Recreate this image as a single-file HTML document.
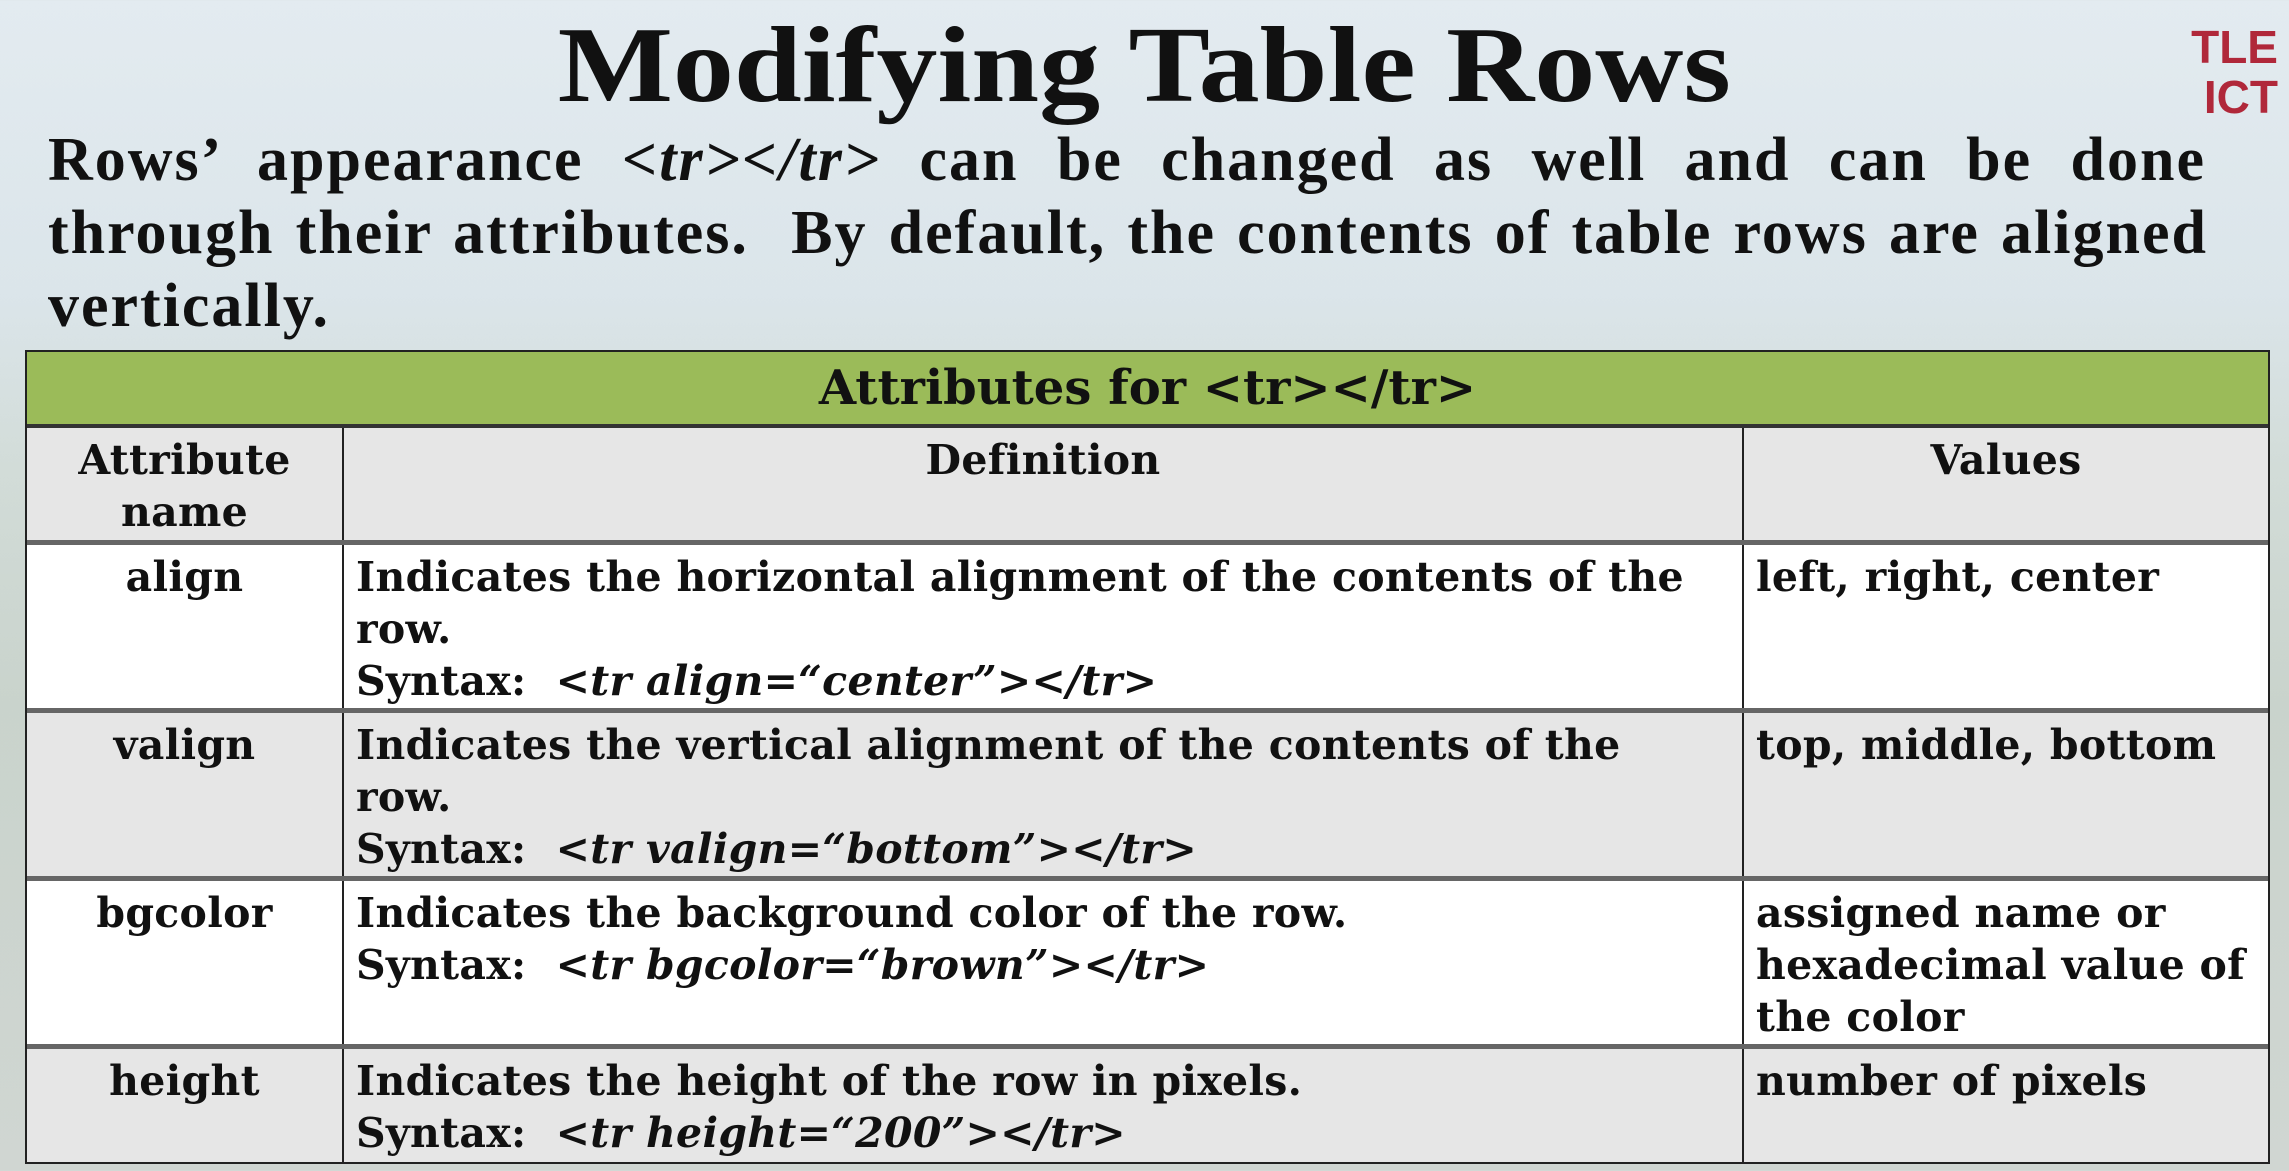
<!DOCTYPE html>
<html><head><meta charset="utf-8"><style>
body{margin:0;width:2289px;height:1171px;overflow:hidden;position:relative;font-family:"Liberation Serif",serif;
background:linear-gradient(180deg,#e3ebf0 0%,#dbe5ea 25%,#d2dcd8 40%,#c9d3cc 60%,#d0d6d2 100%);}
.t{position:absolute;left:0;width:2289px;text-align:center;top:4px;font-size:108px;font-weight:bold;color:#111;transform:scaleX(1.13);transform-origin:1146px 0}
.p{position:absolute;left:48px;width:2158px;font-size:62px;letter-spacing:2px;line-height:73px;font-weight:bold;color:#111;text-align:justify;text-align-last:justify;white-space:nowrap}
.logo{position:absolute;left:2146px;top:22px;width:132px;height:124px;color:#b0283a;font:bold 46px/50px "Liberation Sans",sans-serif;text-align:right}
.tb{position:absolute;left:25px;top:350px;width:2245px;height:814px;border:2px solid #222;box-sizing:border-box;background:#fff}
.r{position:absolute;left:0;width:2241px;box-sizing:border-box;border-bottom:5px solid #666}
.c{position:absolute;top:0;bottom:0;box-sizing:border-box;font:bold 41px/52px "DejaVu Serif",serif;letter-spacing:0.3px;color:#111;padding-top:6px;white-space:nowrap;overflow:hidden}
.c1{left:0;width:317px;text-align:center;border-right:2px solid #222}
.c2{left:317px;width:1400px;padding-left:12px;border-right:2px solid #222}
.c3{left:1717px;width:524px;padding-left:12px}
i{font-style:italic}
</style></head><body>
<div class="t">Modifying Table Rows</div>
<div class="logo">TLE<br>ICT</div>
<div class="p" style="top:124px">Rows’ appearance <i>&lt;tr&gt;&lt;/tr&gt;</i> can be changed as well and can be done</div>
<div class="p" style="top:197px;width:2160px">through their attributes. &nbsp;By default, the contents of table rows are aligned</div>
<div class="p" style="top:270px;text-align-last:left">vertically.</div>
<div class="tb">
 <div class="r" style="top:0;height:76px;background:#9bbb59;border-bottom:4px solid #333;text-align:center;font:bold 48px/72px 'DejaVu Serif',serif;color:#111">Attributes for &lt;tr&gt;&lt;/tr&gt;</div>
 <div class="r" style="top:76px;height:117px;background:#e6e6e6"><div class="c c1">Attribute<br>name</div><div class="c c2" style="text-align:center;padding-left:0">Definition</div><div class="c c3" style="text-align:center;padding-left:0">Values</div></div>
 <div class="r" style="top:193px;height:168px;background:#fff"><div class="c c1">align</div><div class="c c2">Indicates the horizontal alignment of the contents of the<br>row.<br>Syntax: &nbsp;<i>&lt;tr align=“center”&gt;&lt;/tr&gt;</i></div><div class="c c3">left, right, center</div></div>
 <div class="r" style="top:361px;height:168px;background:#e6e6e6"><div class="c c1">valign</div><div class="c c2">Indicates the vertical alignment of the contents of the<br>row.<br>Syntax: &nbsp;<i>&lt;tr valign=“bottom”&gt;&lt;/tr&gt;</i></div><div class="c c3">top, middle, bottom</div></div>
 <div class="r" style="top:529px;height:168px;background:#fff"><div class="c c1">bgcolor</div><div class="c c2">Indicates the background color of the row.<br>Syntax: &nbsp;<i>&lt;tr bgcolor=“brown”&gt;&lt;/tr&gt;</i></div><div class="c c3">assigned name or<br>hexadecimal value of<br>the color</div></div>
 <div class="r" style="top:697px;height:113px;background:#e6e6e6;border-bottom:0"><div class="c c1">height</div><div class="c c2">Indicates the height of the row in pixels.<br>Syntax: &nbsp;<i>&lt;tr height=“200”&gt;&lt;/tr&gt;</i></div><div class="c c3">number of pixels</div></div>
</div>
</body></html>
